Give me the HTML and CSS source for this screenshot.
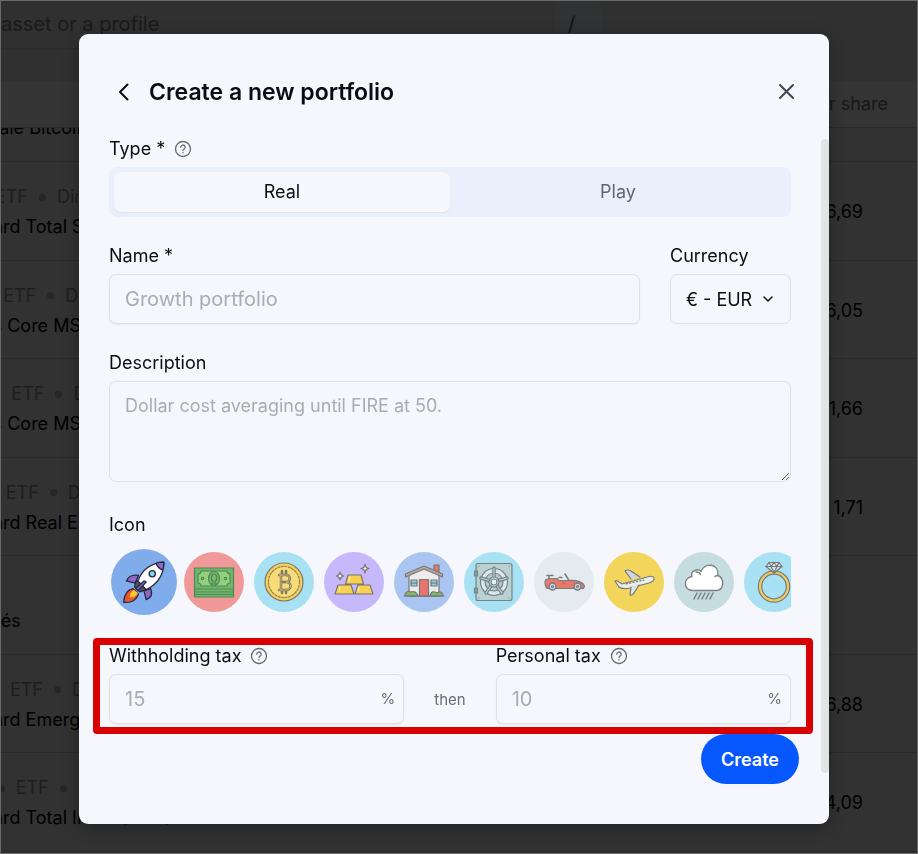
FILE: index.html
```
<!DOCTYPE html>
<html lang="en">
<head>
    <meta charset="UTF-8">
    <meta name="viewport" content="width=device-width, initial-scale=1">
    <title>Create a new portfolio</title>
    <link rel="stylesheet" href="styles.css">
</head>
<body>
    <!-- page behind the dialog -->
    <div class="page">
        <div class="topbar">
            <div class="search">
                <span>asset or a profile</span>
                <kbd>/</kbd>
            </div>
        </div>
        <table class="holdings">
            <thead>
                <tr><th></th><th class="num">er share</th></tr>
            </thead>
            <tbody>
                <tr class="cut"><td><div class="name">Grayscale Bitcoin</div></td><td></td></tr>
                <tr><td><div class="meta">VTI<i></i>ETF<i></i>Direct</div><div class="name">Vanguard Total Stock</div></td><td class="num">6,69</td></tr>
                <tr><td><div class="meta">IEFA<i></i>ETF<i></i>Direct</div><div class="name">iShares Core MSCI</div></td><td class="num">6,05</td></tr>
                <tr><td><div class="meta">IEMG<i></i>ETF<i></i>Direct</div><div class="name">iShares Core MSCI</div></td><td class="num">1,66</td></tr>
                <tr><td><div class="meta">VNQ<i></i>ETF<i></i>Direct</div><div class="name">Vanguard Real Estate</div></td><td class="num">1,71</td></tr>
                <tr><td><div class="meta">&nbsp;</div><div class="name">Liquidités</div></td><td></td></tr>
                <tr><td><div class="meta">VWO<i></i>ETF<i></i>Direct</div><div class="name">Vanguard Emerging</div></td><td class="num">6,88</td></tr>
                <tr><td><div class="meta">VXUS<i></i>ETF<i></i>Direct</div><div class="name">Vanguard Total International</div></td><td class="num">4,09</td></tr>
            </tbody>
        </table>
    </div>

    <svg class="defs" width="0" height="0">
        <symbol id="help" viewBox="0 0 18 18">
            <circle cx="9" cy="9" r="7.5"/>
            <path d="M6.8 7.3a2.2 2.2 0 1 1 3.2 1.9c-.7.4-1 .7-1 1.3"/>
            <path d="M9 12.6v.3"/>
        </symbol>
    </svg>

    <div class="overlay">
        <form class="modal" role="dialog" aria-labelledby="title">
            <header class="modal-head">
                <button type="button" class="icon-btn back" aria-label="Back">
                    <svg width="24" height="24" viewBox="0 0 24 24"><path d="M15.5 4.500 8 12l7.500 7.500"/></svg>
                </button>
                <h1 id="title">Create a new portfolio</h1>
                <button type="button" class="icon-btn close" aria-label="Close">
                    <svg width="24" height="24" viewBox="0 0 24 24"><path d="m5 5 13 13m0-13-13 13"/></svg>
                </button>
            </header>

            <div class="modal-body">
                <div class="field">
                    <div class="label" id="type">Type * <svg class="help"><use href="#help"/></svg></div>
                    <div class="segmented" role="group" aria-labelledby="type">
                        <button type="button" class="active">Real</button>
                        <button type="button">Play</button>
                    </div>
                </div>

                <div class="row">
                    <div class="field grow">
                        <label class="label" for="name">Name *</label>
                        <input class="control" id="name" type="text" placeholder="Growth portfolio">
                    </div>
                    <div class="field">
                        <label class="label" for="currency">Currency</label>
                        <div class="select">
                            <select class="control" id="currency"><option>€ - EUR</option></select>
                            <svg width="12" height="12" viewBox="0 0 12 12"><path d="m2 4 4 4 4-4"/></svg>
                        </div>
                    </div>
                </div>

                <div class="field">
                    <label class="label" for="description">Description</label>
                    <textarea class="control" id="description" placeholder="Dollar cost averaging until FIRE at 50."></textarea>
                </div>

                <div class="field icons">
                    <div class="label" id="icon">Icon</div>
                    <div class="strip" role="group" aria-labelledby="icon">
                        <button type="button" class="pick selected blue" aria-label="Rocket">
                            <svg viewBox="0 0 60 60" stroke="#252a3f">
                                <path d="M20 36c-5 1-8 5-8.500 12.500C18 49 23 47 25 41z" fill="#e8582f"/>
                                <path d="M20.500 37c-2 2-3.500 4-3.500 7 3 0 6-1 7.500-4z" fill="#ffc928" stroke="none"/>
                                <path d="M25 24c-5-1-9 1-11 5l8 2zM36 36c2 5 1 8-4 10l-2-8z" fill="#9067c6"/>
                                <path d="m22.500 29.500-1 5 5 4.500 5-2-5-8z" fill="#4c5366"/>
                                <path d="M24.500 29c3-8 10-16 23.500-17 0 12-6 20-16 25z" fill="#fff"/>
                                <path d="M41 13c2-1 4-1 7-1 0 3 0 5-1 7-3-1-5-3-6-6z" fill="#9067c6"/>
                                <circle cx="37.500" cy="22.500" r="2.800" fill="#86d5ee"/>
                                <path d="m22.500 36 7.500-7 2 1-7.500 8z" fill="#9067c6"/>
                            </svg>
                        </button>
                        <button type="button" class="pick red" aria-label="Cash">
                            <svg viewBox="0 0 60 60" stroke="#4c8955">
                                <path d="M10.500 16h39v29h-39z" fill="#72b66c"/>
                                <path d="M10.500 37h39m-39 3h39m-39 2.500h39"/>
                                <path d="M17 19h26c0 2 1 3 3 3v9c-2 0-3 1-3 3H17c0-2-1-3-3-3v-9c2 0 3-1 3-3z" fill="#94cf7d"/>
                                <ellipse cx="30" cy="26.500" rx="5.500" ry="7" fill="#78b970"/>
                                <path d="M27 32h2v-2c-3-3-2-8 1-8s4 5 1 8v2h2"/>
                                <circle cx="18.500" cy="26.500" r="1.200"/><circle cx="41.500" cy="26.500" r="1.200"/>
                            </svg>
                        </button>
                        <button type="button" class="pick sky" aria-label="Bitcoin">
                            <svg viewBox="0 0 60 60" stroke="#7b7765">
                                <circle cx="30" cy="30" r="19" fill="#f1cf5e"/>
                                <circle cx="30" cy="30" r="15.500" fill="#f8dc79" stroke="#9b804d" stroke-dasharray="2 1.500"/>
                                <path d="M25 23h7c5 0 5 7 0 7 6 0 6 8 0 8h-7m2-15v15m1-8h4m-4-11v4m4-4v4m-4 15v3m4-3v3" stroke-width="2.500"/>
                                <path d="M25 23h7c5 0 5 7 0 7 6 0 6 8 0 8h-7m2-15v15" stroke="#e5c663" stroke-width=".8"/>
                            </svg>
                        </button>
                        <button type="button" class="pick violet" aria-label="Gold">
                            <svg viewBox="0 0 60 60" stroke="#79756c">
                                <path d="m24 23-2.500 9h18L37 23zM14 33l-3 9h19l-3-9zM34 33l-3 9h18l-3-9z" fill="#f7d153"/>
                                <path d="m26 25-1 4m-9 6-1 4m20-4-1 4" stroke="#fff0a0"/>
                                <path d="M41 12c.5 3 1 4 4 4.500-3 .5-3.500 1.500-4 4.500-.5-3-1-4-4-4.500 3-.5 3.500-1.500 4-4.500zM16 20c.4 2.500 1 3.500 3.500 4-2.500.5-3.100 1.500-3.500 4-.4-2.500-1-3.500-3.500-4 2.500-.5 3.100-1.500 3.500-4z" fill="#eee"/>
                            </svg>
                        </button>
                        <button type="button" class="pick periwinkle" aria-label="House">
                            <svg viewBox="0 0 60 60" stroke="#757779">
                                <path d="M40 13h5v10h-5z" fill="#e6776d"/>
                                <path d="M15 23 30 16l15 7v21H15z" fill="#ececea"/>
                                <path d="m11.500 25 18.500-8 18.500 8v-3L30 14l-18.500 8z" fill="#bdaaa0"/>
                                <path d="M17 28h6v6h-6zm20 0h6v6h-6z" fill="#8dcbe2"/>
                                <path d="M17 31h6m14 0h6"/>
                                <path d="M25.500 27.500h9V44h-9z" fill="#e8746d"/>
                                <path d="M11 44c0-5 4-5 6-4 3-1 6 0 7 4zm25 0c1-5 4-5 7-3 3-2 6-1 6 3z" fill="#83ba66"/>
                                <path d="M10 44h40"/>
                            </svg>
                        </button>
                        <button type="button" class="pick sky" aria-label="Safe">
                            <svg viewBox="0 0 60 60" stroke="#71858d">
                                <rect x="12" y="11.500" width="36" height="37" rx="2" fill="#bad0d1"/>
                                <path d="M10.500 19h3v5h-3zm0 17h3v5h-3z" fill="#899da5"/>
                                <circle cx="30" cy="30" r="13.500" fill="#e1e7e9"/>
                                <circle cx="30" cy="30" r="9" fill="#b7c8cd"/>
                                <path d="M30 30V16m0 14-13-4m13 4 13-4M30 30l-8 11m8-11 8 11" stroke-width="3.500"/>
                                <path d="M30 30V16m0 14-13-4m13 4 13-4M30 30l-8 11m8-11 8 11" stroke="#c9d3d7" stroke-width="1.200"/>
                                <circle cx="30" cy="30" r="5" fill="#d8e0e3"/><circle cx="30" cy="30" r="3" fill="#e9eef0"/>
                                <path d="M15 14h.1M45 14h.1M15 46h.1M45 46h.1"/>
                            </svg>
                        </button>
                        <button type="button" class="pick silver" aria-label="Car">
                            <svg viewBox="0 0 60 60" stroke="#777d84">
                                <path d="M15 24v3m-2-3.500h6" stroke-width="1.500"/>
                                <path d="M11.500 28c1-1 3-1.500 5-1.500h7l1 2h9c8-.5 15 .5 17 5.500l-1 2.500H13c-2-2-2.500-6-1.500-8.500z" fill="#e87869"/>
                                <path d="m31 22 4 6.500m-10-3h3" stroke-width="1.500"/>
                                <path d="M29 31h2" stroke="#9c6869"/>
                                <circle cx="18.500" cy="34.500" r="3.500" fill="#cdd3d6" stroke-width="1.500"/><circle cx="43.500" cy="34.500" r="3.500" fill="#cdd3d6" stroke-width="1.500"/>
                                <circle cx="18.500" cy="34.500" r="1"/><circle cx="43.500" cy="34.500" r="1"/>
                            </svg>
                        </button>
                        <button type="button" class="pick yellow" aria-label="Plane">
                            <svg viewBox="0 0 60 60" stroke="#777773">
                                <path d="m27 27-6-8c2-2 4-1 6 0l9 6" fill="#cbd8df"/>
                                <path d="M11 29c2-1 3 0 4 1l3 2 25-7c3-1 6-1 7 1s-2 4-5 5l-19 5c-5 1-9 1-11-1z" fill="#e8edee"/>
                                <path d="M27 35c0 3-1 5-1 8 2 1 3-1 4-2l5-8" fill="#dce5e8"/>
                                <path d="m22 32 18-4" stroke-dasharray="1.500 2"/>
                            </svg>
                        </button>
                        <button type="button" class="pick sage" aria-label="Cloud">
                            <svg viewBox="0 0 60 60" stroke="#7b8285">
                                <path d="M19 38.500c-10 0-10-13-1-14-2-5 6-9 9-5 3-9 18-9 17 4 7 3 6 15-2 15z" fill="#fff" stroke-width="1.400"/>
                                <path d="M22 20c2 0 4 1 4.500 2.500m14.500 2c1-1 2-1 3-1" stroke-width="1.400"/>
                                <path d="m23 41-3 6m7-6-3 6m7-6-3 6m7-6-3 6m7-6-3 6" stroke-width="1.500"/>
                            </svg>
                        </button>
                        <button type="button" class="pick sky" aria-label="Ring">
                            <svg viewBox="0 0 60 60" stroke="#72787d">
                                <circle cx="30" cy="34.500" r="14" stroke-width="4.500"/>
                                <circle cx="30" cy="34.500" r="14" stroke="#efcb5c" stroke-width="2.200"/>
                                <path d="M25 10.500h10l3 4-8 6.500-8-6.500z" fill="#dce7ec"/>
                                <path d="M22 14.500h16m-13-4 2 4 3 6 3-6 2-4m-8 4 3-4 3 4"/>
                            </svg>
                        </button>
                    </div>
                </div>

                <div class="taxes">
                    <div class="field">
                        <label class="label" for="withholding">Withholding tax <svg class="help"><use href="#help"/></svg></label>
                        <div class="percent control">
                            <input id="withholding" type="text" placeholder="15"><span>%</span>
                        </div>
                    </div>
                    <span class="then">then</span>
                    <div class="field">
                        <label class="label" for="personal">Personal tax <svg class="help"><use href="#help"/></svg></label>
                        <div class="percent control">
                            <input id="personal" type="text" placeholder="10"><span>%</span>
                        </div>
                    </div>
                    <div class="highlight"></div>
                </div>
            </div>

            <footer class="modal-foot">
                <button type="submit" class="create">Create</button>
            </footer>
            <div class="scrollbar"></div>
        </form>
    </div>
</body>
</html>
```
FILE: styles.css
```
* { margin: 0; padding: 0; box-sizing: border-box; }
html, body { height: 100%; }
body {
    overflow: hidden;
    background: #323232;
    color: #0b0c10;
    font: 18px/24px Inter, "Liberation Sans", sans-serif;
}
button, input, select, textarea { font: inherit; color: inherit; }
button { border: 0; background: none; cursor: pointer; }
svg { display: block; fill: none; stroke-linecap: round; stroke-linejoin: round; }
.defs { position: absolute; }

/* page behind */
.page {
    height: 100%;
    border: 1px solid #6a6a6a;
    overflow: hidden;
    color: #000;
}
.topbar { height: 80px; background: #303030; }
.search {
    display: flex;
    justify-content: space-between;
    width: 600px;
    max-width: 100%;
    height: 48px;
    border-bottom: 1px solid #2c2c2c;
    color: #1a1a1a;
    font-size: 20px;
    line-height: 46px;
}
.search kbd {
    width: 46px;
    padding-left: 13px;
    background: #303233;
    color: #111;
    font: inherit;
}
.holdings {
    width: 100%;
    border-collapse: separate;
    border-spacing: 0;
    table-layout: fixed;
}
.holdings th {
    position: relative;
    z-index: 1;
    height: 47px;
    background: #343434;
    border-bottom: 1px solid #292929;
    color: #171717;
    font-weight: 400;
}
.holdings tbody tr { height: 98px; }
.holdings tbody tr:nth-child(even) { height: 99px; }
.holdings tbody .cut { height: 34px; }
.holdings td {
    padding-top: 2px;
    border-bottom: 1px solid #292929;
    line-height: 30px;
    vertical-align: middle;
    white-space: nowrap;
}
.holdings .meta { margin-left: -64px; }
.holdings .name { margin-left: -62px; }
.holdings .num { padding-right: 54px; text-align: right; }
.holdings th.num { padding-right: 29px; }
/* first row is scrolled under the table head */
.holdings .cut td { padding-top: 0; vertical-align: top; }
.holdings .cut .name { margin-top: -15px; }
.meta { display: flex; align-items: center; gap: 11px; color: #1e1e1e; }
.meta i { width: 7px; height: 7px; border-radius: 50%; background: #262626; }

/* dialog */
.overlay {
    position: fixed;
    inset: 0;
    z-index: 10;
    display: flex;
    align-items: flex-start;
    justify-content: center;
    padding: 34px 40px 30px 30px;
}
.modal {
    position: relative;
    width: 100%;
    max-width: 750px;
    padding-bottom: 40px;
    border-radius: 9px;
    background: #f5f7fc;
    box-shadow: 0 4px 16px rgba(0, 0, 0, .3);
}
.modal-head {
    display: flex;
    align-items: center;
    height: 102px;
    padding: 14px 30px 0 33px;
}
.modal-head h1 {
    flex: 1;
    padding-left: 13px;
    font-size: 23px;
    line-height: 30px;
    font-weight: 600;
}
.icon-btn svg { stroke: #0b0c10; stroke-width: 2; }
.icon-btn.close svg { stroke: #44464c; }
.modal-body {
    display: flex;
    flex-direction: column;
    gap: 26px;
    padding: 0 38px 10px 30px;
}
.field { display: flex; flex-direction: column; gap: 6px; min-width: 0; }
.grow { flex: 1; }
.row { display: flex; gap: 30px; }
.label { display: flex; align-items: center; gap: 9px; padding-top: 1px; }
.help { width: 18px; height: 18px; stroke: #6b6d73; stroke-width: 1.3; }

.segmented {
    display: flex;
    height: 50px;
    padding: 5px;
    border-radius: 8px;
    background: #e9f0fb;
}
.segmented button { flex: 1; border-radius: 7px; color: #63666d; }
.segmented .active {
    background: #f5f7fc;
    color: #0b0c10;
    box-shadow: 0 1px 2px rgba(0, 0, 0, .06);
}

.control {
    width: 100%;
    height: 50px;
    padding: 0 15px;
    border: 1px solid #dfe1e6;
    border-radius: 7px;
    background: #f5f7fc;
    outline: none;
}
input.control, .percent { box-shadow: 0 1px 2px rgba(0, 0, 0, .06); }
input { font-size: 20px; }
::placeholder { color: #aaacb3; opacity: 1; }
textarea.control { display: block; height: 101px; padding: 12px 15px; resize: vertical; }
.select { position: relative; }
.select select { width: 121px; padding-top: 2px; appearance: none; }
.select svg {
    position: absolute;
    top: 19px;
    right: 17px;
    stroke: #0b0c10;
    stroke-width: 1.5;
    pointer-events: none;
}

.icons { padding-top: 4px; }
.strip { display: flex; overflow: hidden; padding: 6px 0 2px; align-items: center; }
.pick { flex: none; width: 60px; height: 60px; margin: 0 5px; border-radius: 50%; }
.pick.selected { width: 66px; height: 66px; margin: 0 5px 0 2px; }
.pick.selected + .pick { margin-left: 2px; }
.pick svg { width: 100%; height: 100%; stroke-width: 1.2; }
.blue { background: #80acec; }
.red { background: #f19999; }
.sky { background: #a9e1f4; }
.violet { background: #c5b9fc; }
.periwinkle { background: #abc5f3; }
.silver { background: #e5eaee; }
.yellow { background: #f3d55c; }
.sage { background: #c5dce0; }

.taxes {
    position: relative;
    display: grid;
    grid-template-columns: 1fr auto 1fr;
    gap: 30px;
    align-items: end;
}
.percent { display: flex; align-items: center; padding-right: 8px; }
.percent input { flex: 1; min-width: 0; border: 0; background: none; outline: none; }
.percent span, .then { color: #6b6d73; font-size: 15px; }
.then { line-height: 48px; }
/* red marker round the tax fields */
.highlight {
    position: absolute;
    inset: -5px -22px -10px -16px;
    border: 7px solid #d80000;
    border-radius: 4px;
    pointer-events: none;
}

.modal-foot { display: flex; justify-content: flex-end; padding-right: 30px; }
.create {
    height: 50px;
    padding: 1px 20px 0;
    border-radius: 25px;
    background: #0757ff;
    color: #fff;
    font-weight: 600;
}
.scrollbar {
    position: absolute;
    top: 105px;
    right: 0;
    bottom: 51px;
    width: 8px;
    border-radius: 4px;
    background: #e2e3e5;
}
```
